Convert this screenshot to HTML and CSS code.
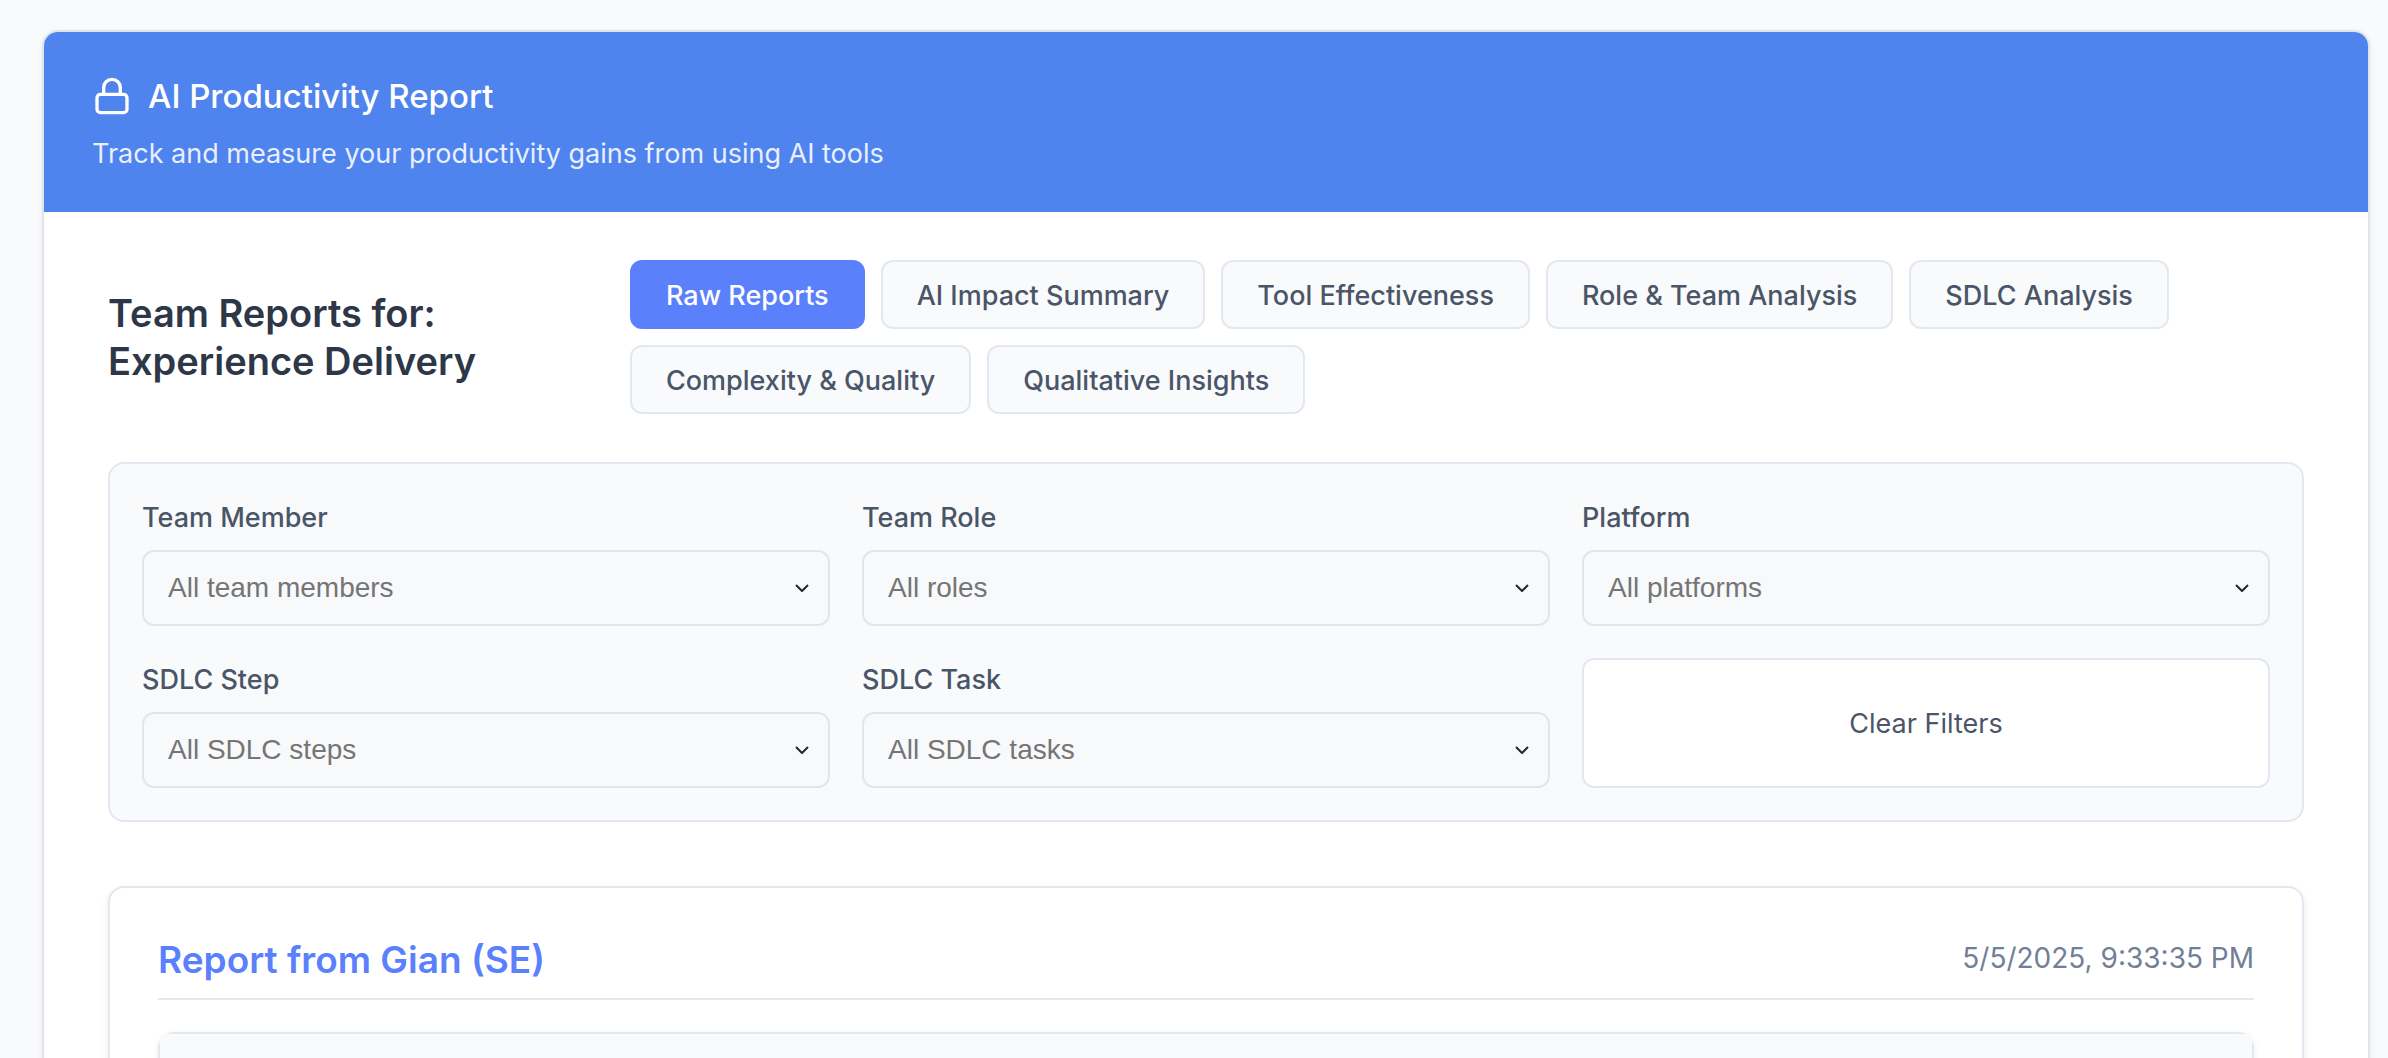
FILE: index.html
```html
<!DOCTYPE html>
<html lang="en">
<head>
<meta charset="utf-8">
<title>AI Productivity Report</title>
<link rel="stylesheet" href="styles.css">
</head>
<body>
<main class="shell">
  <header class="banner">
    <h1 class="banner-title">
      <svg class="banner-icon" viewBox="0 0 24 24" fill="none" stroke="currentColor" stroke-width="2" stroke-linecap="round" stroke-linejoin="round" aria-hidden="true"><rect x="3" y="11" width="18" height="11" rx="2"/><path d="M7 11V7a5 5 0 0 1 10 0v4"/></svg>
      AI Productivity Report
    </h1>
    <p class="banner-sub">Track and measure your productivity gains from using AI tools</p>
  </header>
  <div class="content">
    <div class="toolbar">
      <h2 class="heading">Team Reports for:<br>Experience Delivery</h2>
      <nav class="tabs" aria-label="Report views">
        <button class="tab tab-active" type="button">Raw Reports</button>
        <button class="tab" type="button">AI Impact Summary</button>
        <button class="tab" type="button">Tool Effectiveness</button>
        <button class="tab" type="button">Role &amp; Team Analysis</button>
        <button class="tab" type="button">SDLC Analysis</button>
        <button class="tab" type="button">Complexity &amp; Quality</button>
        <button class="tab" type="button">Qualitative Insights</button>
      </nav>
    </div>
    <form class="filters">
      <div class="field">
        <label class="label" for="member">Team Member</label>
        <div class="picker">
          <select class="select" id="member"><option>All team members</option></select>
          <svg class="chevron" viewBox="0 0 16 10" aria-hidden="true"><path d="M2 2l6 6 6-6"/></svg>
        </div>
      </div>
      <div class="field">
        <label class="label" for="role">Team Role</label>
        <div class="picker">
          <select class="select" id="role"><option>All roles</option></select>
          <svg class="chevron" viewBox="0 0 16 10" aria-hidden="true"><path d="M2 2l6 6 6-6"/></svg>
        </div>
      </div>
      <div class="field">
        <label class="label" for="platform">Platform</label>
        <div class="picker">
          <select class="select" id="platform"><option>All platforms</option></select>
          <svg class="chevron" viewBox="0 0 16 10" aria-hidden="true"><path d="M2 2l6 6 6-6"/></svg>
        </div>
      </div>
      <div class="field">
        <label class="label" for="step">SDLC Step</label>
        <div class="picker">
          <select class="select" id="step"><option>All SDLC steps</option></select>
          <svg class="chevron" viewBox="0 0 16 10" aria-hidden="true"><path d="M2 2l6 6 6-6"/></svg>
        </div>
      </div>
      <div class="field">
        <label class="label" for="task">SDLC Task</label>
        <div class="picker">
          <select class="select" id="task"><option>All SDLC tasks</option></select>
          <svg class="chevron" viewBox="0 0 16 10" aria-hidden="true"><path d="M2 2l6 6 6-6"/></svg>
        </div>
      </div>
      <button class="clear" type="reset">Clear Filters</button>
    </form>
    <article class="report">
      <div class="report-head">
        <h3 class="report-title">Report from Gian (SE)</h3>
        <time class="report-time" datetime="2025-05-05T21:33:35">5/5/2025, 9:33:35 PM</time>
      </div>
      <section class="entry"><div class="entry-head"></div></section>
    </article>
  </div>
</main>
</body>
</html>
```
FILE: styles.css
```css
* {
  box-sizing: border-box;
}

body {
  margin: 0;
  height: 100vh;
  overflow: hidden;
  padding: 30px 18px 0 42px;
  background: #f9fafc;
  color: #2d3748;
  font-family: Inter, "Liberation Sans", sans-serif;
  font-size: 27px;
}

h1, h2, h3, p {
  margin: 0;
}

button, select {
  font: inherit;
}

.shell {
  border: 2px solid #e2e4e8;
  border-radius: 16px;
  background: #fff;
  box-shadow: 0 2px 6px rgba(0, 0, 0, 0.06);
  overflow: hidden;
}

.banner {
  padding: 40px 48px 36px;
  background: #4f83ee;
  color: #fff;
}

.banner-title {
  display: flex;
  align-items: center;
  gap: 16px;
  font-size: 33px;
  font-weight: 500;
  line-height: 48px;
}

.banner-icon {
  width: 40px;
  height: 40px;
}

.banner-sub {
  margin-top: 12px;
  line-height: 44px;
  color: #e8effd;
}

.content {
  padding: 48px 64px;
}

.toolbar {
  display: flex;
  align-items: center;
  gap: 32px;
  margin-bottom: 48px;
}

.heading {
  flex: 0 0 490px;
  font-size: 38px;
  font-weight: 600;
  line-height: 48px;
}

.tabs {
  display: flex;
  flex-wrap: wrap;
  gap: 16px;
}

.tab {
  padding: 13px 34px 11px;
  border: 2px solid #e2e8f0;
  border-radius: 12px;
  background: #f9fafc;
  color: #4a5568;
  font-weight: 500;
  line-height: 41px;
}

.tab-active {
  border-color: #5b80fb;
  background: #5b80fb;
  color: #fff;
}

.filters {
  display: grid;
  grid-template-columns: repeat(3, 1fr);
  gap: 32px;
  margin-bottom: 64px;
  padding: 32px;
  border: 2px solid #e2e8f0;
  border-radius: 16px;
  background: #f9fafc;
}

.field {
  display: flex;
  flex-direction: column;
  gap: 10px;
}

.label {
  color: #4a5568;
  font-weight: 500;
  line-height: 44px;
}

.picker {
  position: relative;
}

.select {
  display: block;
  width: 100%;
  height: 76px;
  padding: 0 24px 2px;
  border: 2px solid #e5e5e5;
  border-radius: 12px;
  appearance: none;
  background: #f8f9fb;
  color: #757575;
  font-family: "Liberation Sans", sans-serif;
  font-size: 28px;
}

.chevron {
  position: absolute;
  top: 33px;
  right: 20px;
  width: 16px;
  height: 10px;
  fill: none;
  stroke: #1f2937;
  stroke-width: 2;
  stroke-linejoin: round;
  pointer-events: none;
}

.clear {
  border: 2px solid #e2e8f0;
  border-radius: 12px;
  background: #fff;
  color: #4a5568;
}

.report {
  padding: 48px;
  border: 2px solid #e2e8f0;
  border-radius: 16px;
  box-shadow: 0 4px 8px rgba(0, 0, 0, 0.08);
}

.report-head {
  display: flex;
  align-items: flex-start;
  justify-content: space-between;
  margin-bottom: 32px;
  padding-bottom: 14px;
  border-bottom: 2px solid #e2e8f0;
}

.report-title {
  color: #5b80fb;
  font-size: 37px;
  font-weight: 600;
  line-height: 48px;
}

.report-time {
  color: #718096;
  font-size: 28px;
  line-height: 44px;
}

.entry {
  border: 2px solid #e2e8f0;
  border-radius: 16px;
  box-shadow: 0 2px 6px rgba(0, 0, 0, 0.08);
}

.entry-head {
  height: 96px;
  background: #f9fafc;
}
```
